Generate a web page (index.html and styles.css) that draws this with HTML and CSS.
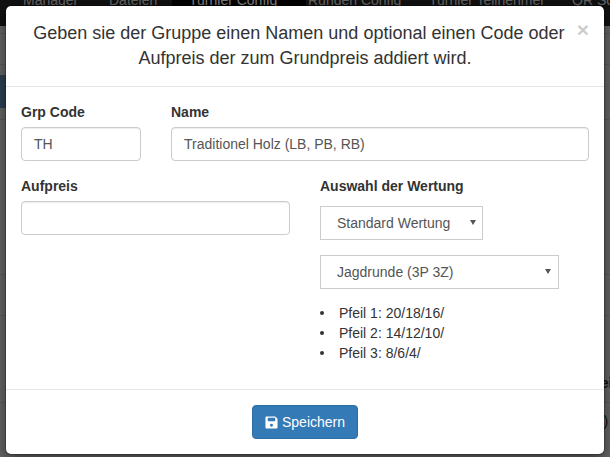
FILE: index.html
```html
<!DOCTYPE html>
<html lang="de">
<head>
<meta charset="utf-8">
<title>Gruppe</title>
<link rel="stylesheet" href="styles.css">
</head>
<body>
<div class="page">
  <nav class="topnav">
    <a class="nav-item nav-manager">Manager</a>
    <a class="nav-item nav-files">Dateien</a>
    <a class="nav-item nav-active">Turnier Config</a>
    <a class="nav-item nav-rounds">Runden Config</a>
    <a class="nav-item nav-people">Turnier Teilnehmer</a>
    <a class="nav-item nav-qr">QR Scan</a>
  </nav>
  <div class="band band-a"></div>
  <div class="band band-b"></div>
  <div class="band band-blue"></div>
  <div class="band band-c"></div>
  <div class="band band-d"></div>
  <div class="band band-e"></div>
  <div class="band band-f"></div>
  <div class="band band-g"></div>
  <div class="peek peek-top">Preis</div>
  <div class="peek peek-bottom">(0)</div>
</div>
<div class="backdrop"></div>
<div class="modal">
  <header class="modal-header">
    <button class="close" type="button">×</button>
    <h4 class="modal-title">Geben sie der Gruppe einen Namen und optional einen Code oder Aufpreis der zum Grundpreis addiert wird.</h4>
  </header>
  <section class="modal-body">
    <div class="row-top">
      <div class="field field-code">
        <label class="label" for="code">Grp Code</label>
        <input class="input" id="code" type="text" value="TH">
      </div>
      <div class="field field-name">
        <label class="label" for="name">Name</label>
        <input class="input" id="name" type="text" value="Traditionel Holz (LB, PB, RB)">
      </div>
    </div>
    <div class="row-bottom">
      <div class="field">
        <label class="label" for="price">Aufpreis</label>
        <input class="input" id="price" type="text">
      </div>
      <div class="field">
        <label class="label label-tight">Auswahl der Wertung</label>
        <div class="select-wrap select-short">
          <select class="select"><option>Standard Wertung</option></select>
        </div>
        <div class="select-wrap select-long">
          <select class="select"><option>Jagdrunde (3P 3Z)</option></select>
        </div>
        <ul class="arrows">
          <li>Pfeil 1: 20/18/16/</li>
          <li>Pfeil 2: 14/12/10/</li>
          <li>Pfeil 3: 8/6/4/</li>
        </ul>
      </div>
    </div>
  </section>
  <footer class="modal-footer">
    <button class="btn" type="button">
      <svg class="btn-icon" viewBox="0 0 14 14" width="13" height="13" aria-hidden="true">
        <path fill="#fff" fill-rule="evenodd" d="M1.5 0.5H11L13.5 3V12.3A1.2 1.2 0 0 1 12.3 13.5H1.7A1.2 1.2 0 0 1 .5 12.3V1.5A1 1 0 0 1 1.5 .5ZM3 1.8V5.6H11V1.8ZM7 8.4A1.6 1.6 0 1 0 7 11.6A1.6 1.6 0 1 0 7 8.4Z"/>
      </svg>Speichern
    </button>
  </footer>
</div>
</body>
</html>
```

FILE: styles.css
```css
* { box-sizing: border-box; }

html, body {
  margin: 0;
  height: 100%;
  overflow: hidden;
}

body {
  font-family: "Liberation Sans", Arial, sans-serif;
  font-size: 14px;
  line-height: 20px;
  color: #333;
  background: #fff;
}

.page {
  height: 457px;
  overflow: hidden;
  position: relative;
}

.topnav {
  height: 26px;
  background: #222;
  display: flex;
  color: #ccc;
  font-size: 14px;
  line-height: 16px;
  align-items: flex-end;
  padding-left: 23px;
  white-space: nowrap;
}

.nav-item {
  flex: none;
  padding-bottom: 18px;
}
.nav-manager { width: 86px; }
.nav-files { width: 63px; }
.nav-active {
  width: 134px;
  padding-left: 17px;
  background: #000;
  color: #fff;
}
.nav-rounds { width: 123px; padding-left: 2px; }
.nav-people { width: 143px; }

.band { border-bottom: 1px solid #b8b8b8; background: #d0d0d0; }
.band-a { height: 8px; }
.band-b { height: 31px; }
.band-blue {
  height: 43px;
  border: 0;
  background:
    linear-gradient(#d0d0d0 10px, transparent 10px),
    linear-gradient(90deg, #5d87ab 300px, #d0d0d0 300px);
}
.band-c { height: 12px; }
.band-d { height: 155px; }
.band-e { height: 41px; }
.band-f { height: 87px; }
.band-g { height: 60px; }

.peek {
  position: absolute;
  white-space: nowrap;
  color: #222;
}
.peek-top { top: 373px; left: 586px; font-weight: 700; }
.peek-bottom { top: 411px; left: 591px; }

.backdrop {
  position: absolute;
  inset: 0;
  background: rgba(0, 0, 0, .5);
}

.modal {
  position: absolute;
  left: 5px;
  top: 5px;
  width: 600px;
  background: #fff;
  background-clip: padding-box;
  border: 1px solid rgba(0, 0, 0, .2);
  border-radius: 6px;
  box-shadow: 0 5px 15px rgba(0, 0, 0, .5);
}

.modal-header {
  padding: 15px;
  border-bottom: 1px solid #e5e5e5;
}

.modal-title {
  margin: 0;
  font-size: 18px;
  font-weight: 400;
  line-height: 25px;
  text-align: center;
}

.close {
  float: right;
  padding: 0;
  margin-top: -2px;
  border: 0;
  background: transparent;
  font-family: inherit;
  font-size: 21px;
  font-weight: 700;
  line-height: 21px;
  color: #000;
  opacity: .2;
  text-shadow: 0 1px 0 #fff;
}

.modal-body {
  padding: 15px;
}

.row-top {
  display: flex;
  gap: 30px;
  margin-bottom: 15px;
}

.field-code { flex: 0 0 120px; }
.field-name { flex: 1; }

.row-bottom {
  display: grid;
  grid-template-columns: 269px 1fr;
  gap: 30px;
}

.label {
  display: block;
  margin-bottom: 5px;
  font-weight: 700;
}

.label-tight { margin-bottom: 10px; }

.input {
  display: block;
  width: 100%;
  height: 34px;
  padding: 6px 12px;
  border: 1px solid #ccc;
  border-radius: 4px;
  background: #fff;
  box-shadow: inset 0 1px 1px rgba(0, 0, 0, .075);
  font: inherit;
  color: #555;
}

.select-wrap {
  position: relative;
  margin-bottom: 15px;
}

.select-short { width: 163px; }
.select-long { width: 239px; margin-bottom: 14px; }

.select-wrap::after {
  content: "";
  position: absolute;
  right: 7px;
  top: 14px;
  border-left: 3px solid transparent;
  border-right: 3px solid transparent;
  border-top: 5px solid #555;
  pointer-events: none;
}

.select-long::after { right: 8px; }

.select {
  display: block;
  width: 100%;
  height: 34px;
  padding: 6px 12px 6px 16px;
  border: 1px solid #ccc;
  border-radius: 0;
  background: #fff;
  font: inherit;
  color: #555;
  appearance: none;
  -webkit-appearance: none;
}

.arrows {
  margin: 0 0 11px;
  padding: 0;
  list-style: none;
}

.arrows li {
  display: flex;
  align-items: center;
}

.arrows li::before {
  content: "";
  flex: none;
  width: 4px;
  height: 4px;
  margin-right: 15px;
  border-radius: 50%;
  background: #333;
}

.modal-footer {
  padding: 15px;
  border-top: 1px solid #e5e5e5;
  text-align: center;
}

.btn {
  display: inline-flex;
  align-items: center;
  height: 34px;
  padding: 6px 12px;
  border: 1px solid #2e6da4;
  border-radius: 4px;
  background: #337ab7;
  color: #fff;
  font: inherit;
  vertical-align: top;
}

.btn-icon {
  margin-right: 4px;
  flex: none;
}
```
